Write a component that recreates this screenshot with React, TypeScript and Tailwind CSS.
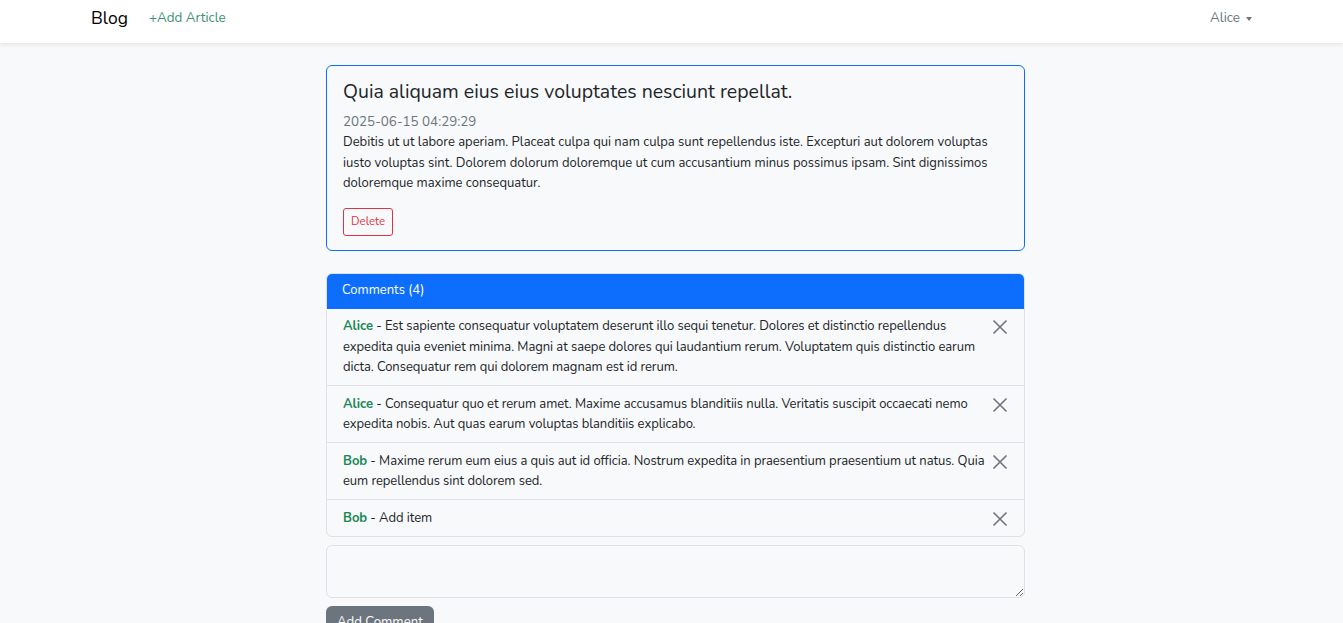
import React from 'react';

const comments = [
  {
    author: 'Alice',
    body: 'Est sapiente consequatur voluptatem deserunt illo sequi tenetur. Dolores et distinctio repellendus expedita quia eveniet minima. Magni at saepe dolores qui laudantium rerum. Voluptatem quis distinctio earum dicta. Consequatur rem qui dolorem magnam est id rerum.',
  },
  {
    author: 'Alice',
    body: 'Consequatur quo et rerum amet. Maxime accusamus blanditiis nulla. Veritatis suscipit occaecati nemo expedita nobis. Aut quas earum voluptas blanditiis explicabo.',
  },
  {
    author: 'Bob',
    body: 'Maxime rerum eum eius a quis aut id officia. Nostrum expedita in praesentium praesentium ut natus. Quia eum repellendus sint dolorem sed.',
  },
  { author: 'Bob', body: 'Add item' },
];

function CloseIcon() {
  return (
    <svg width="16" height="16" viewBox="0 0 16 16" className="text-[#6c757d]" aria-hidden="true">
      <path d="M1.5 1.5l13 13M14.5 1.5l-13 13" stroke="currentColor" strokeWidth="1.6" fill="none" />
    </svg>
  );
}

export default function App() {
  return (
    <div className="min-h-[623px] bg-[#f8f9fa] text-[13px] leading-[1.5] text-[#212529] font-['Nunito','Lato','Open_Sans',sans-serif]">
      <nav className="bg-white shadow-[0_2px_4px_rgba(0,0,0,0.08)]">
        <div className="mx-auto w-[1161px] h-[43px] flex items-center">
          <span className="text-[17.5px] text-black mr-[21px] -mt-[7px]">Blog</span>
          <a className="text-[13.4px] text-[#3b8f75] -mt-[7px]">+Add Article</a>
          <div className="ml-auto flex items-center gap-[6px] text-[13.4px] text-[#6c757d] -mt-[7px]">
            Alice
            <span className="border-t-[4px] border-t-[#6c757d] border-x-[3.5px] border-x-transparent mt-[2px]" />
          </div>
        </div>
      </nav>

      <main className="mx-auto w-[1161px] pt-[22px]">
        <div className="ml-[235px] w-[699px]">
          <div className="rounded-[6px] border border-[#0d6efd] px-[16px] pt-[12px] pb-[14px]">
            <h5 className="text-[19.5px] leading-[1.2] mb-[9px] mt-[2px]">Quia aliquam eius eius voluptates nesciunt repellat.</h5>
            <div className="text-[13.4px] text-[#6c757d] leading-[20px]">2025-06-15 04:29:29</div>
            <p className="leading-[20.5px] mb-[14px]">
              Debitis ut ut labore aperiam. Placeat culpa qui nam culpa sunt repellendus iste. Excepturi aut dolorem voluptas iusto voluptas sint. Dolorem dolorum doloremque ut cum accusantium minus possimus ipsam. Sint dignissimos doloremque maxime consequatur.
            </p>
            <button className="h-[28px] px-[7px] rounded-[3px] border border-[#dc3545] text-[#dc3545] text-[11.5px]">Delete</button>
          </div>

          <div className="mt-[22px] rounded-[6px] border border-[#dee2e6] overflow-hidden">
            <div className="bg-[#0d6efd] text-white h-[36px] flex items-center px-[16px] -mx-px -mt-px">Comments (4)</div>
            {comments.map((c, i) => (
              <div key={i} className={`flex items-start px-[16px] py-[7.5px] ${i > 0 ? 'border-t border-[#dee2e6]' : ''}`}>
                <p className="flex-1 leading-[20.5px] tracking-[-0.06px]">
                  <span className="font-bold text-[#198754]">{c.author}</span> - {c.body}
                </p>
                <button className="w-[20px] h-[20px] flex items-center justify-center mt-[1px] -mr-[2px]">
                  <CloseIcon />
                </button>
              </div>
            ))}
          </div>

          <textarea className="mt-[8px] block w-full h-[53px] rounded-[6px] border border-[#dee2e6] bg-[#f8f9fa] px-[12px] py-[6px]" />
          <button className="mt-[8px] h-[34px] px-[11px] rounded-[6px] bg-[#6c757d] text-white text-[13.2px]">Add Comment</button>
        </div>
      </main>
    </div>
  );
}
